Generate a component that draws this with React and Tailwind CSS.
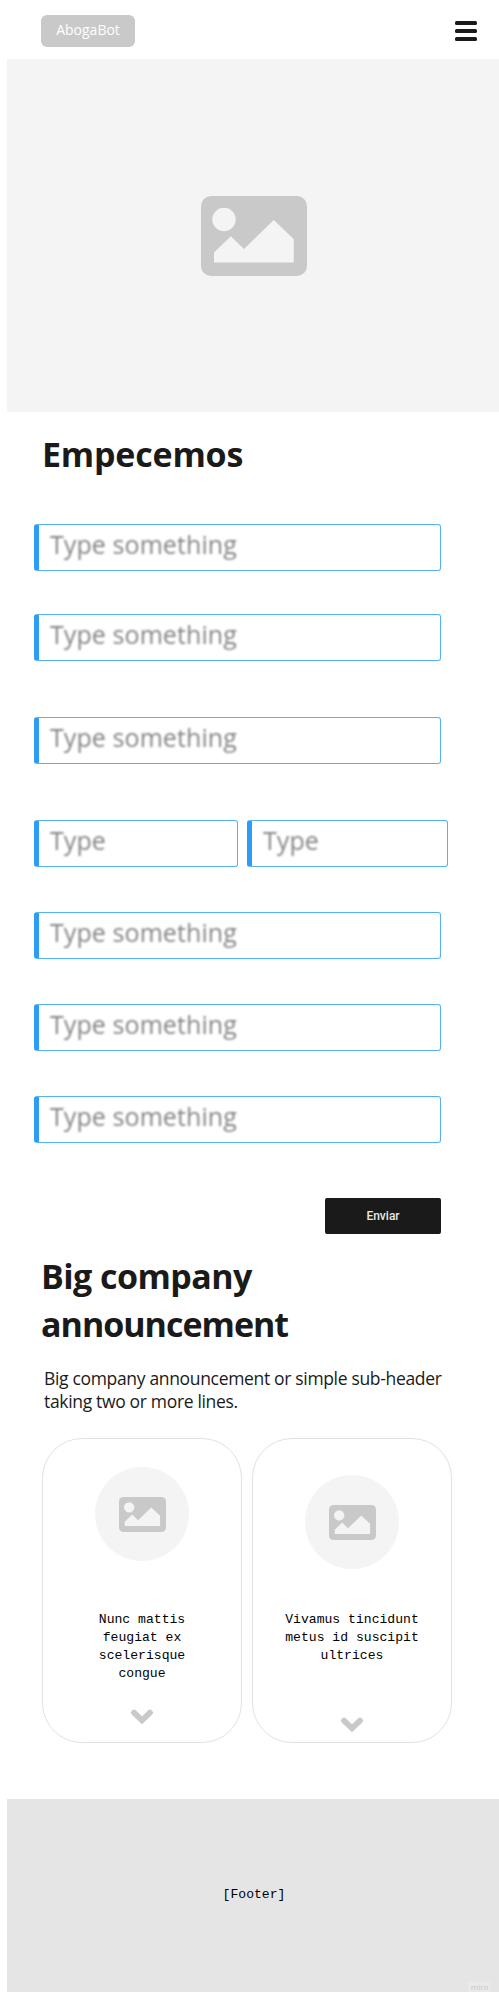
import React from "react";

function ImageIcon({ className }) {
  return (
    <svg viewBox="0 0 106 80" preserveAspectRatio="none" className={className} aria-hidden="true">
      <rect width="106" height="80" rx="10" fill="#c9c9c9" />
      <circle cx="23" cy="23.500" r="11.700" fill="#f4f4f4" />
      <path d="M13 56.500 29.800 40.200 43 53 72.700 24 92.700 43V66.500H13Z" fill="#f4f4f4" />
    </svg>
  );
}

function Chevron() {
  return (
    <svg viewBox="0 0 24 16" className="h-4 w-6 shrink-0" aria-hidden="true">
      <path d="M4 3.700 12 11.300 20 3.700" fill="none" stroke="#c9c9c9" strokeWidth="5.800" strokeLinecap="round" />
    </svg>
  );
}

function Field({ text = "Type something", className }) {
  return (
    <div
      className={`flex h-[47px] rounded-[3px] border border-l-[5px] border-[#55b0f7] border-l-[#2d9cf4] bg-white pl-[11px] ${className}`}
    >
      <span className="mt-[0.5px] h-9 whitespace-nowrap font-['Open_Sans',sans-serif] text-[25px] leading-9 tracking-[0.08px] text-[#858585] blur-[0.9px]">
        {text}
      </span>
    </div>
  );
}

function Card({ lines, top, bottom }) {
  return (
    <article className={`flex h-[305px] w-[200px] flex-col items-center rounded-[40px] border border-[#e2e2e2] ${top}`}>
      <div className="flex size-[94px] shrink-0 items-center justify-center rounded-full bg-[#f4f4f4]">
        <ImageIcon className="h-[35px] w-[47px]" />
      </div>
      <p className={`h-[72px] text-center font-['Liberation_Mono',monospace] text-[13.1px] leading-[18px] text-black ${bottom}`}>
        {lines.map((line) => (
          <span key={line} className="block">{line}</span>
        ))}
      </p>
      <Chevron />
    </article>
  );
}

export default function App() {
  return (
    <div className="h-[2001px] w-[499px] overflow-hidden bg-white text-[#1a1a1a]">
      <header className="flex h-[59px] items-start justify-between pl-[41px] pr-[22px] pt-[15px]">
        <div className="flex h-8 w-[94px] items-center justify-center rounded-[6px] bg-[#c9c9c9] font-['Open_Sans',sans-serif] text-[14px] leading-5 text-white">
          <span className="-mt-[2px]">AbogaBot</span>
        </div>
        <div className="mt-[6px] flex w-[22px] flex-col gap-[4px]">
          <span className="h-[4px] rounded-[1.5px] bg-[#1a1a1a]" />
          <span className="h-[4px] rounded-[1.5px] bg-[#1a1a1a]" />
          <span className="h-[4px] rounded-[1.5px] bg-[#1a1a1a]" />
        </div>
      </header>
      <section className="ml-[7px] flex h-[353px] items-center justify-center bg-[#f4f4f4]">
        <ImageIcon className="ml-[2px] h-20 w-[106px]" />
      </section>
      <h1 className="ml-[42px] mt-[18px] h-12 whitespace-nowrap font-['Open_Sans',sans-serif] text-[34px] font-bold leading-[48px] tracking-[-0.2px]">
        Empecemos
      </h1>
      <form className="ml-[34px] mt-[46px] flex w-[414px] flex-col">
        <Field className="w-[407px]" />
        <Field className="mt-[43px] w-[407px]" />
        <Field className="mt-[56px] w-[407px]" />
        <div className="mt-[56px] flex gap-[9px]">
          <Field text="Type" className="w-[204px]" />
          <Field text="Type" className="w-[201px]" />
        </div>
        <Field className="mt-[45px] w-[407px]" />
        <Field className="mt-[45px] w-[407px]" />
        <Field className="mt-[45px] w-[407px]" />
        <button
          type="button"
          className="ml-[291px] mt-[55px] flex h-9 w-[116px] items-center justify-center rounded-[2px] bg-[#1a1a1a] font-[Roboto,sans-serif] text-[12px] font-medium text-[#e8e8e8]"
        >
          Enviar
        </button>
      </form>
      <h2 className="ml-[41px] mt-[18px] h-24 whitespace-nowrap font-['Open_Sans',sans-serif] text-[34px] font-bold leading-[48px]">
        <span className="block tracking-[-0.55px]">Big company</span>
        <span className="block tracking-[-1px]">announcement</span>
      </h2>
      <p className="ml-[44px] mt-[19px] h-[46px] whitespace-nowrap font-['Open_Sans',sans-serif] text-[17.500px] leading-[23px] tracking-[-0.33px]">
        <span className="block">Big company announcement or simple sub-header</span>
        <span className="block">taking two or more lines.</span>
      </p>
      <section className="ml-[42px] mt-[25px] flex gap-[10px]">
        <Card lines={["Nunc mattis", "feugiat ex", "scelerisque", "congue"]} top="pt-[28px]" bottom="mt-[50px] mb-[26px]" />
        <Card lines={["Vivamus tincidunt", "metus id suscipit", "ultrices"]} top="pt-[36px]" bottom="mt-[42px] mb-[34px]" />
      </section>
      <footer className="relative ml-[7px] mt-[56px] flex h-[193px] items-center justify-center bg-[#e5e5e5] font-['Liberation_Mono',monospace] text-[13.1px] text-black">
        <span className="-mt-px ml-[2px]">[Footer]</span>
        <span className="absolute bottom-0 right-[8px] h-[10px] w-[23px] bg-[#e9e9e9] text-center font-['Open_Sans',sans-serif] text-[8px] leading-[10px] text-[#c6c6d0]">
          miro
        </span>
      </footer>
    </div>
  );
}
